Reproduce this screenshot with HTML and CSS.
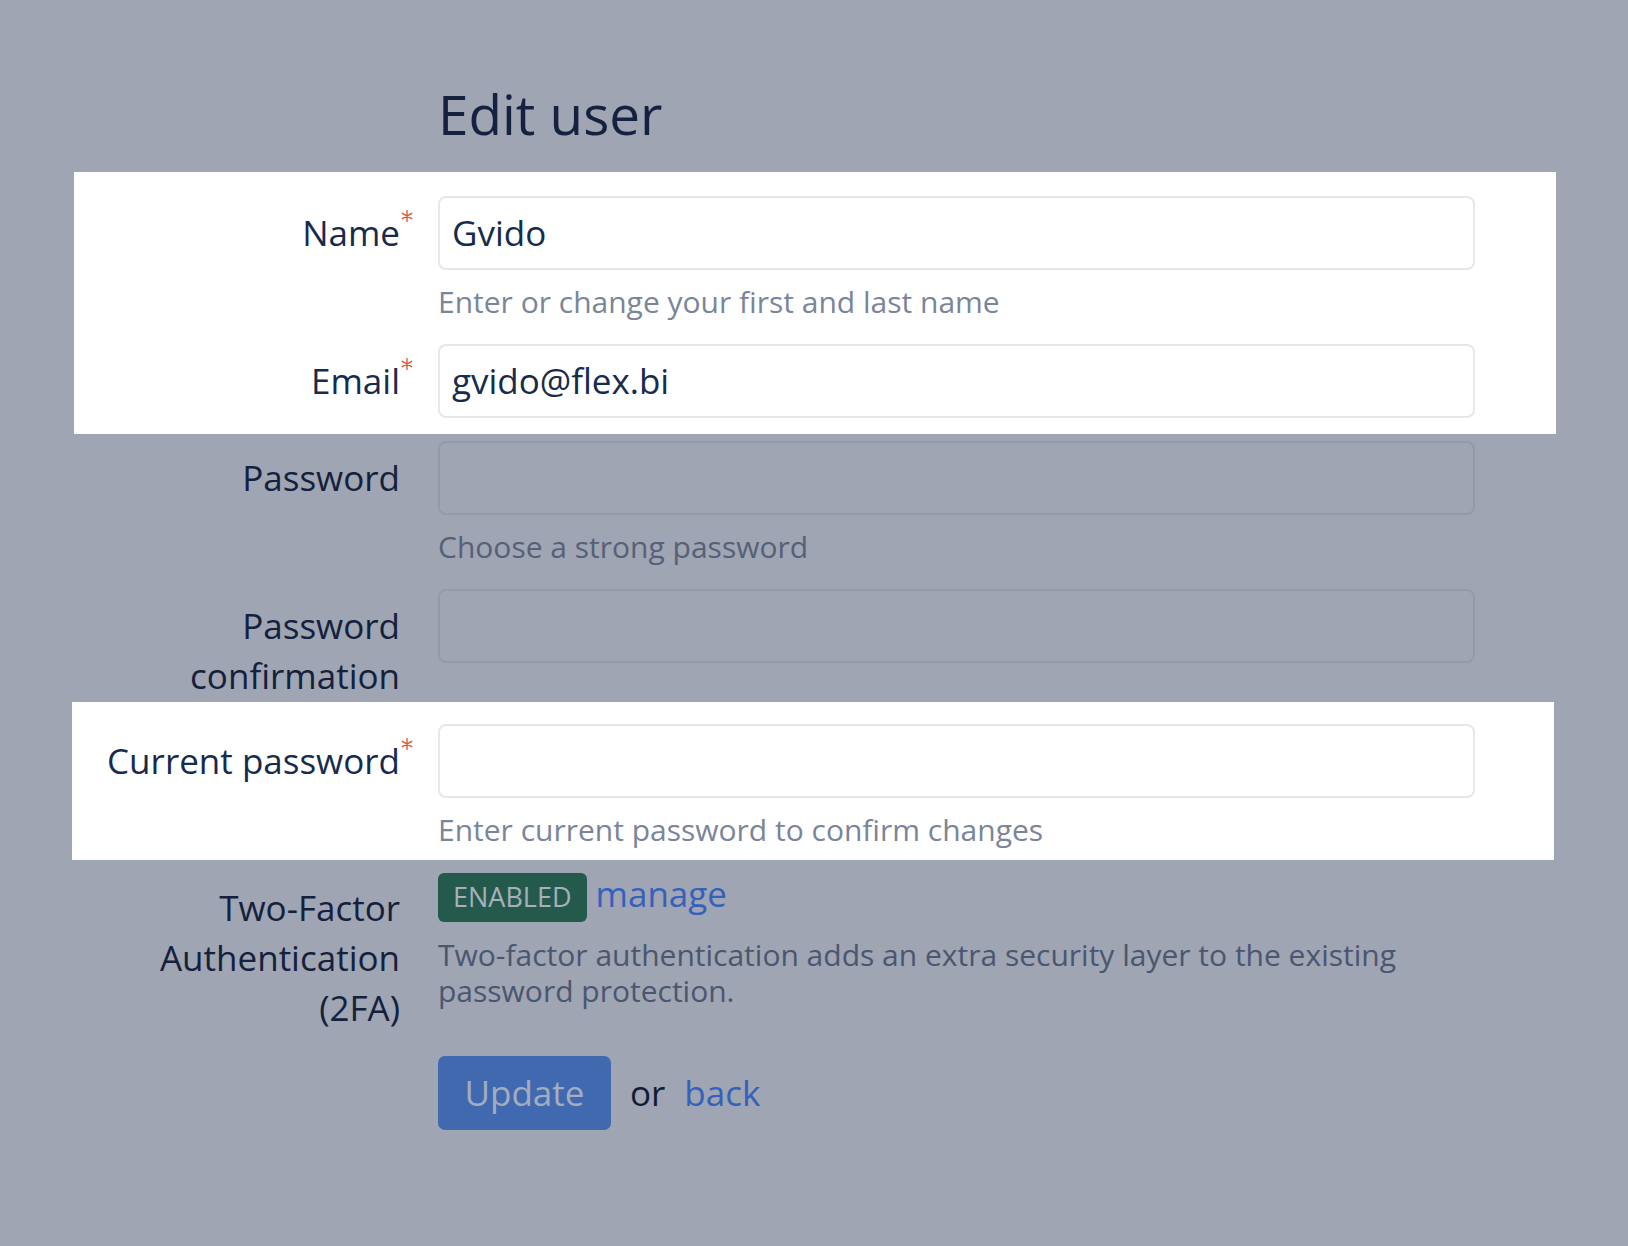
FILE: index.html
```html
<!DOCTYPE html>
<html lang="en">
<head>
<meta charset="utf-8">
<title>Edit user</title>
<link rel="stylesheet" href="styles.css">
</head>
<body>
<main class="page">
  <h1 class="title">Edit user</h1>

  <section class="hl hl-top">
    <div class="group">
      <label class="label"><span class="req">Name<svg class="star" viewBox="0 0 12 12" aria-hidden="true"><path d="M6 0.6V11.4M1.3 3.3L10.7 8.7M1.3 8.7L10.7 3.3"/></svg></span></label>
      <div class="field">
        <input class="input" type="text" value="Gvido">
        <p class="help">Enter or change your first and last name</p>
      </div>
    </div>
    <div class="group group-last">
      <label class="label"><span class="req">Email<svg class="star" viewBox="0 0 12 12" aria-hidden="true"><path d="M6 0.6V11.4M1.3 3.3L10.7 8.7M1.3 8.7L10.7 3.3"/></svg></span></label>
      <div class="field">
        <input class="input" type="text" value="gvido@flex.bi">
      </div>
    </div>
  </section>

  <div class="group group-pw dim">
    <label class="label">Password</label>
    <div class="field">
      <input class="input input-dim" type="password">
      <p class="help help-dim">Choose a strong password</p>
    </div>
  </div>

  <div class="group group-conf dim">
    <label class="label">Password confirmation</label>
    <div class="field">
      <input class="input input-dim" type="password">
    </div>
  </div>

  <section class="hl hl-bottom">
    <div class="group group-last">
      <label class="label"><span class="req">Current password<svg class="star" viewBox="0 0 12 12" aria-hidden="true"><path d="M6 0.6V11.4M1.3 3.3L10.7 8.7M1.3 8.7L10.7 3.3"/></svg></span></label>
      <div class="field">
        <input class="input" type="password">
        <p class="help">Enter current password to confirm changes</p>
      </div>
    </div>
  </section>

  <div class="group group-tfa dim">
    <label class="label">Two-Factor Authentication (2FA)</label>
    <div class="field">
      <div class="tfa-line">
        <span class="badge">ENABLED</span>
        <a class="link link-manage" href="#">manage</a>
      </div>
      <p class="desc">Two-factor authentication adds an extra security layer to the existing password protection.</p>
    </div>
  </div>

  <div class="actions">
    <button class="btn" type="button">Update</button>
    <span class="or">or</span>
    <a class="link" href="#">back</a>
  </div>
</main>
</body>
</html>
```

FILE: styles.css
```css
html, body {
  margin: 0;
  padding: 0;
}

body {
  background: #9fa5b2;
  font-family: "Open Sans", "Noto Sans", sans-serif;
  color: #172b4d;
  min-height: 1246px;
}

.page {
  width: 1482px;
  margin-left: 74px;
  padding-top: 82px;
}

.title {
  margin: 0 0 25px 364px;
  font-size: 54.8px;
  line-height: 64.8px;
  font-weight: 400;
  color: #14223f;
}

.hl {
  background: #ffffff;
}

.hl-top {
  padding: 24px 0 16px;
}

.hl-bottom {
  margin: 1px 2px 0 -2px;
  padding: 22px 0 12px 2px;
}

.group {
  display: grid;
  grid-template-columns: 326px 1037px;
  column-gap: 38px;
  margin-bottom: 24px;
}

.group-last {
  margin-bottom: 0;
}

.group-pw {
  margin-top: 7px;
}

.group-conf {
  margin-bottom: 0;
}

.group-tfa {
  margin-top: 11px;
  margin-bottom: 23px;
}

.label {
  display: block;
  padding-top: 12px;
  text-align: right;
  font-size: 35px;
  line-height: 50px;
  color: #172b4d;
}

.dim .label {
  color: #14213d;
}

.req {
  position: relative;
}

.star {
  position: absolute;
  left: 100%;
  top: 1px;
  margin-left: 1px;
  width: 12px;
  height: 12px;
  fill: none;
  stroke: #e2552d;
  stroke-width: 1.35;
  stroke-linecap: round;
}

.field {
  min-width: 0;
}

.input {
  display: block;
  box-sizing: border-box;
  width: 100%;
  height: 74px;
  margin: 0;
  padding: 0 12px;
  border: 2px solid #e6e7ed;
  border-radius: 8px;
  background: #ffffff;
  font-family: "Open Sans", "Noto Sans", sans-serif;
  font-size: 35px;
  color: #172b4d;
  outline: none;
}

.input-dim {
  background: #9fa5b2;
  border-color: #949aa8;
}

.help {
  margin: 13px 0 0;
  font-size: 30px;
  line-height: 37px;
  color: #7a8599;
}

.help-dim {
  color: #566178;
}

.tfa-line {
  display: flex;
  align-items: baseline;
  gap: 9px;
}

.badge {
  display: inline-block;
  padding: 6px 15px 7px;
  border-radius: 6px;
  background: #245a4b;
  color: #a6b0bb;
  font-size: 27px;
  line-height: 36px;
}

.link {
  color: #3561bd;
  text-decoration: none;
  font-size: 35px;
  line-height: 50px;
}

.link-manage {
  line-height: 46px;
}

.desc {
  margin: 15px 0 0;
  font-size: 30px;
  line-height: 36px;
  color: #4b5670;
}

.actions {
  display: flex;
  align-items: center;
  gap: 19px;
  margin-left: 364px;
}

.btn {
  margin: 0;
  padding: 12px 26.5px;
  border: 0;
  border-radius: 7px;
  background: #4169b0;
  color: #a3adbf;
  font-family: "Open Sans", "Noto Sans", sans-serif;
  font-size: 35px;
  line-height: 50px;
  cursor: pointer;
}

.or {
  font-size: 35px;
  line-height: 50px;
  color: #101d38;
}
```
